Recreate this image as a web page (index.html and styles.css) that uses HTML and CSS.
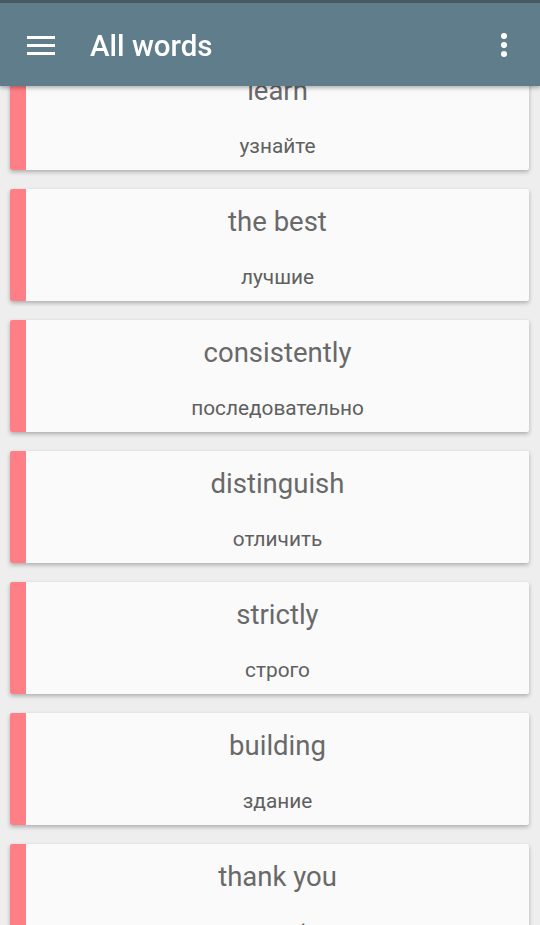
FILE: index.html
```html
<!DOCTYPE html>
<html>
<head>
<meta charset="utf-8">
<link rel="stylesheet" href="styles.css">
</head>
<body>
<div class="statusbar"></div>
<header class="toolbar">
  <svg class="menu" width="28" height="20" viewBox="0 0 28 20"><rect x="0" y="1" width="28" height="3" fill="#fff"/><rect x="0" y="9" width="28" height="3" fill="#fff"/><rect x="0" y="17" width="28" height="3" fill="#fff"/></svg>
  <h1 class="title">All words</h1>
  <svg class="more" width="8" height="24" viewBox="0 0 8 24"><circle cx="4" cy="3" r="3" fill="#fff"/><circle cx="4" cy="12" r="3" fill="#fff"/><circle cx="4" cy="21" r="3" fill="#fff"/></svg>
</header>
<main class="list">
  <div class="card"><div class="stripe"></div><div class="content"><div class="word">learn</div><div class="tr">узнайте</div></div></div>
  <div class="card"><div class="stripe"></div><div class="content"><div class="word">the best</div><div class="tr">лучшие</div></div></div>
  <div class="card"><div class="stripe"></div><div class="content"><div class="word">consistently</div><div class="tr">последовательно</div></div></div>
  <div class="card"><div class="stripe"></div><div class="content"><div class="word">distinguish</div><div class="tr">отличить</div></div></div>
  <div class="card"><div class="stripe"></div><div class="content"><div class="word">strictly</div><div class="tr">строго</div></div></div>
  <div class="card"><div class="stripe"></div><div class="content"><div class="word">building</div><div class="tr">здание</div></div></div>
  <div class="card"><div class="stripe"></div><div class="content"><div class="word">thank you</div><div class="tr">спасибо</div></div></div>
</main>
</body>
</html>
```
FILE: styles.css
```css
html, body {
  margin: 0;
  padding: 0;
  background: #eeeeee;
  font-family: Roboto, "Noto Sans", sans-serif;
  overflow: hidden;
  height: 925px;
}
.statusbar {
  position: fixed;
  top: 0;
  left: 0;
  right: 0;
  height: 3px;
  background: #46595f;
  z-index: 3;
}
.toolbar {
  position: fixed;
  top: 3px;
  left: 0;
  right: 0;
  height: 83px;
  background: #607d8b;
  display: flex;
  align-items: center;
  box-shadow: 0 2px 4px rgba(0,0,0,0.3);
  z-index: 2;
}
.menu {
  margin-left: 27px;
}
.title {
  margin: 2px 0 0 35px;
  color: #fff;
  font-size: 29.5px;
  font-weight: 500;
  flex: 1;
}
.more {
  margin-right: 32px;
}
.list {
  padding: 58px 11px 0 10px;
  display: flex;
  flex-direction: column;
  gap: 19px;
}
.card {
  display: flex;
  height: 112px;
  background: #fafafa;
  border-radius: 2px;
  box-shadow: 0 2px 4px rgba(0,0,0,0.28);
  overflow: hidden;
  flex-shrink: 0;
}
.stripe {
  width: 16px;
  background: #ff7f87;
}
.content {
  flex: 1;
  display: flex;
  flex-direction: column;
  align-items: center;
}
.word {
  margin-top: 18px;
  font-size: 27.5px;
  line-height: 30px;
  color: #696969;
}
.tr {
  margin-top: 27px;
  font-size: 20.8px;
  line-height: 26px;
  color: #606060;
}
```
